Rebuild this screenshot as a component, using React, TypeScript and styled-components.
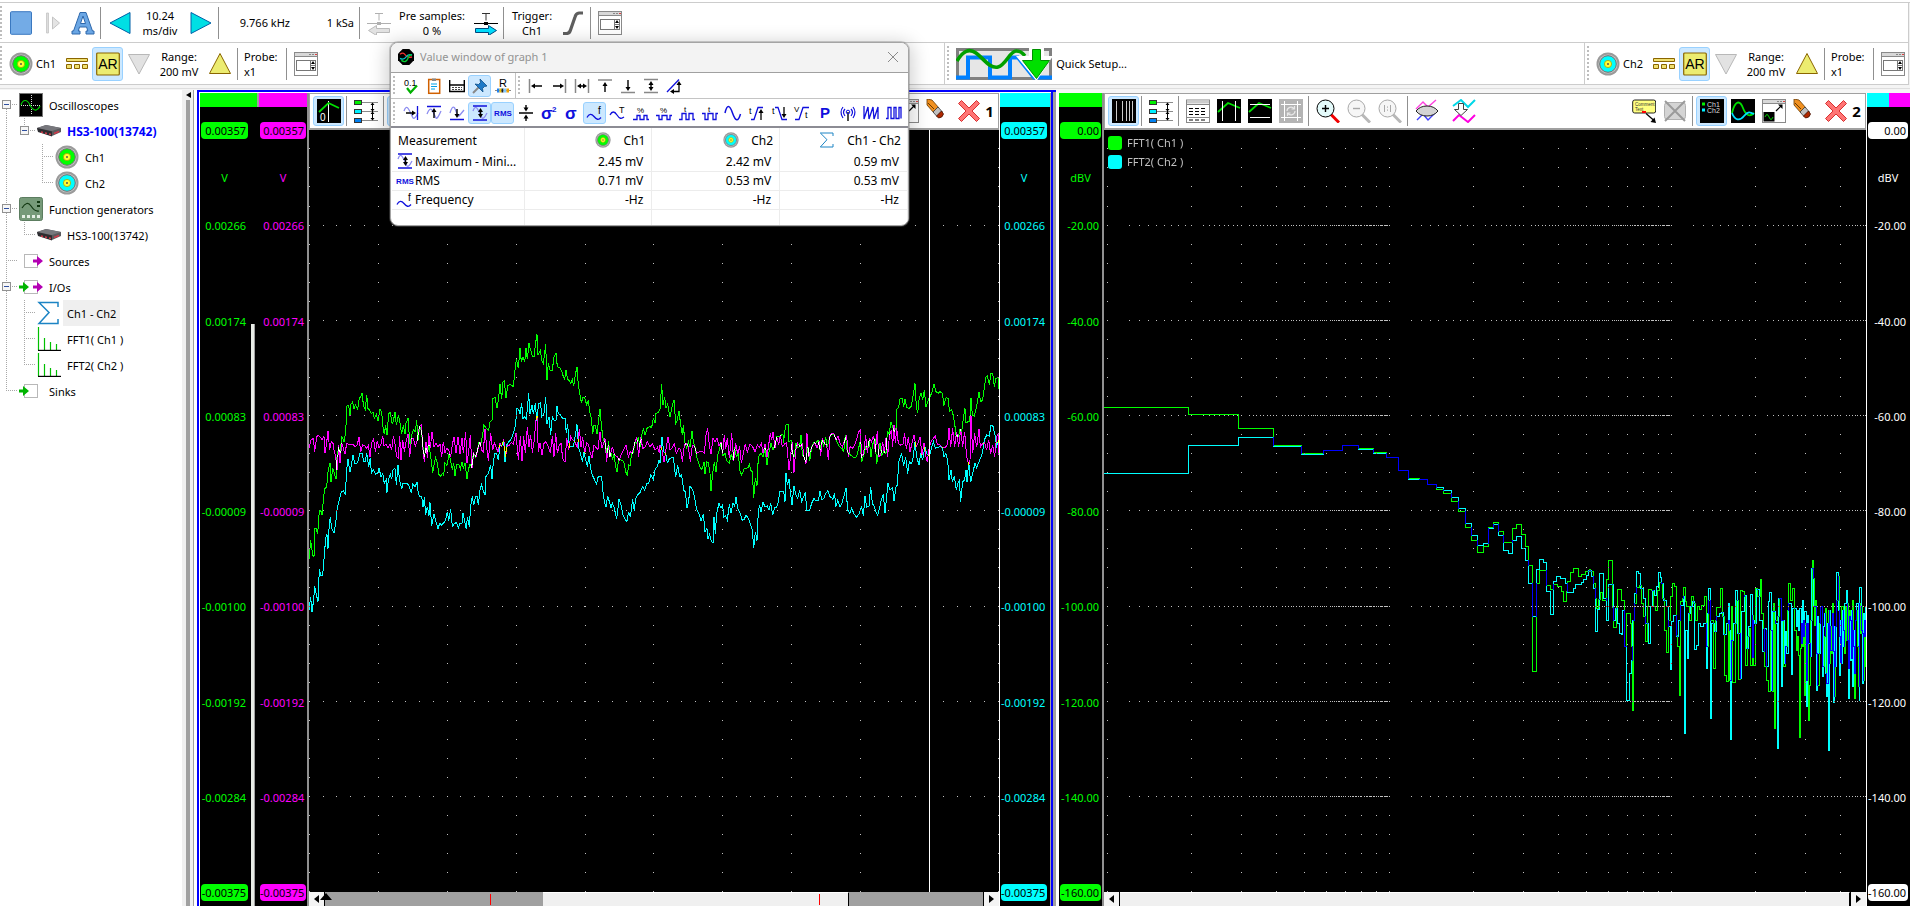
import React from "react";
import styled, { createGlobalStyle, css } from "styled-components";

const UI_FONT = '"Noto Sans", "Open Sans", sans-serif';
const GREEN = "#00ff00";
const CYAN = "#00ffff";
const MAGENTA = "#ff00ff";
const HIGHLIGHT = "#cce8ff";
const HIGHLIGHT_EDGE = "#99d1ff";

const GlobalStyle = createGlobalStyle`
  * { box-sizing: border-box; }
  html, body { margin: 0; padding: 0; background: #f0f0f0; }
  body { font-family: ${UI_FONT}; font-size: 11px; line-height: 15px; color: #000; overflow: hidden; }
  button { font: inherit; color: inherit; padding: 0; margin: 0; border: 0; background: none; }
  svg { display: block; }
  ul, ol { list-style: none; margin: 0; padding: 0; }
`;

/* ---------- page frame ---------- */

const Page = styled.div`
  position: relative;
  display: flex;
  flex-direction: column;
  height: 100vh;
  min-height: 600px;
`;

const MenuEdge = styled.div`
  height: 3px;
  background: #fff;
  border-bottom: 1px solid #cccccc;
`;

const ToolRow = styled.div<{ $height: number }>`
  display: flex;
  height: ${(p) => p.$height}px;
  margin-right: 1px;
  background: #fff;
  border-bottom: 1px solid #cccccc;
  border-right: 1px solid #cccccc;
`;

const ToolGroup = styled.div<{ $divided?: boolean }>`
  display: flex;
  align-items: center;
  ${(p) => p.$divided && "border-left: 1px solid #cccccc; padding-left: 2px;"}
`;

const Spacer = styled.div<{ $grow?: number }>`
  flex: ${(p) => p.$grow ?? 1};
`;

const Grip = styled.div<{ $width: number }>`
  align-self: stretch;
  width: ${(p) => p.$width}px;
  margin: 3px 0;
  background: repeating-linear-gradient(to bottom, #bdbdbd 0 2px, transparent 2px 4px) left / 2px 100% no-repeat;
`;

const Rule = styled.div<{ $height?: number }>`
  width: 6px;
  height: ${(p) => p.$height ?? 32}px;
  background: linear-gradient(#909090, #909090) 2px 0 / 1px 100% no-repeat;
`;

const ToolButton = styled.button<{ $on?: boolean; $height?: number }>`
  display: flex;
  align-items: center;
  justify-content: center;
  flex: none;
  width: 31px;
  height: ${(p) => p.$height ?? 34}px;
  border-radius: 3px;
  border: 1px solid transparent;
  ${(p) =>
    p.$on &&
    css`
      background: ${HIGHLIGHT};
      border-color: ${HIGHLIGHT_EDGE};
    `}
`;

const ToolText = styled.div<{ $width: number; $align?: string }>`
  width: ${(p) => p.$width}px;
  text-align: ${(p) => p.$align ?? "center"};
  white-space: pre-line;
`;

const RecordText = styled(ToolText)`
  margin-right: 3px;
`;

const ProbeText = styled(ToolText)`
  padding-left: 3px;
`;

const QuickSetupButton = styled.button`
  display: flex;
  align-items: center;
  gap: 3px;
  margin-left: 4px;
`;

const DockEdge = styled.div`
  height: 5px;
  background: linear-gradient(#dedede, #dedede) 0 3px / 100% 1px no-repeat #f4f4f4;
`;

const Workspace = styled.main`
  flex: 1;
  min-height: 0;
  display: grid;
  grid-template-columns: 182px 15px minmax(0, 859fr) minmax(0, 854fr);
`;

/* ---------- icons ---------- */

const Icon: React.FC<{ size?: number; children: React.ReactNode }> = ({ size = 24, children }) => (
  <svg width={size} height={size} viewBox="0 0 24 24" fill="none" aria-hidden="true">
    {children}
  </svg>
);

const ChannelIcon = ({ color, size }: { color: string; size?: number }) => (
  <Icon size={size}>
    <circle cx="12" cy="12" r="11.5" fill="#9a9a9a" />
    <circle cx="12" cy="12" r="9.6" fill="#c9c9c9" />
    <circle cx="12" cy="12" r="8.3" fill={color} stroke="#6f6f6f" strokeWidth="1" />
    <circle cx="12" cy="12" r="3.6" fill="#ffff30" stroke="#a8a800" strokeWidth=".8" />
    <circle cx="12" cy="12" r="1" fill="#555" />
  </Icon>
);

const PanelIcon = () => (
  <Icon>
    <rect x=".5" y=".5" width="23" height="23" fill="#fff" stroke="#8a8a8a" />
    <path d="M1 2.5h22" stroke="#d8d8d8" strokeWidth="3" />
    <path d="M.5 4.5h23" stroke="#8a8a8a" />
    <path d="M15 2.5h2M18 2.5h2" stroke="#888" />
    <path d="M21 2.5h2" stroke="#e04040" />
    <rect x="2.5" y="8.500" width="19" height="10" stroke="#777" />
    <path d="M16.500 8.500v10M16.500 13.500h5" stroke="#777" />
    <path d="M17 12l2-3 2 3zM17 15l2 3 2-3z" fill="#000" />
  </Icon>
);

const DcIcon = () => (
  <Icon>
    <path d="M1.500 6.500h21v3h-21zM1.500 12.500h5v4h-5zM9.500 12.500h5v4h-5zM17.500 12.500h5v4h-5z" fill="#f0e070" stroke="#8a6500" />
  </Icon>
);

const AutoRangeIcon = () => (
  <Icon>
    <rect x=".7" y="1" width="22.600" height="22" rx="1" fill="#ecec70" stroke="#8a6500" strokeWidth="1.200" />
    <text x="12" y="16.500" textAnchor="middle" fontFamily='"Liberation Sans", sans-serif' fontSize="14" fill="#000">AR</text>
  </Icon>
);

const TriangleIcon = ({ dir, fill, stroke }: { dir: "up" | "down" | "left" | "right"; fill: string; stroke: string }) => {
  const shapes = {
    up: "M12 1.500L22.500 21.500H1.500z",
    down: "M12 22L22.500 2.500H1.500z",
    left: "M2 12L22 1.500V22.500z",
    right: "M22 12L2 1.500V22.500z",
  };
  return (
    <Icon>
      <path d={shapes[dir]} fill={fill} stroke={stroke} />
    </Icon>
  );
};

const StopIcon = () => (
  <Icon>
    <rect x="1.500" y=".7" width="21" height="22.600" rx="1" fill="#73abe6" stroke="#3a78c0" />
  </Icon>
);

const OneShotIcon = () => (
  <Icon>
    <path d="M6.500 2h2v20h-2z" fill="#ddd" stroke="#c4c4c4" strokeWidth=".8" />
    <path d="M12.500 6l7 6-7 6z" fill="#e4e4e4" stroke="#c4c4c4" />
  </Icon>
);

const AutoIcon = () => (
  <Icon>
    <path
      fillRule="evenodd"
      d="M9 1.500h6L21.500 20H23v3h-8v-3h1.800l-1.200-4H8.500l-1.200 4H9v3H1v-3h1.500L8 4.500zM9.500 12.500h5L12 5z"
      fill="#6aa6e4"
      stroke="#2e68ac"
      strokeWidth="1"
    />
  </Icon>
);

const PreSampleIcon = ({ active }: { active?: boolean }) => {
  const ink = active ? "#000" : "#b0b0b0";
  return (
    <Icon>
      <path d="M8 2.500h8M12 2.500v7" stroke={active ? "#333" : "#b0b0b0"} />
      <path d="M0 12.500h24" stroke={ink} />
      <rect x="10" y="11" width="4" height="3" fill={ink} />
      {active ? (
        <path d="M1.500 17.500h13v-3l8 5-8 5v-3h-13z" fill="#00dfff" stroke="#004a80" />
      ) : (
        <path d="M22.500 17.500h-13v-3l-8 5 8 5v-3h13z" fill="#e2e2e2" stroke="#bbb" />
      )}
    </Icon>
  );
};

const SlopeIcon = () => (
  <Icon>
    <path d="M2 22.500h3.500q3 0 4-3.500L14 6q1-3.700 4-4h4" stroke="#5e5e5e" strokeWidth="3.200" />
  </Icon>
);

const QuickSetupIcon = () => (
  <svg width="97" height="34" viewBox="0 0 97 34" fill="none" aria-hidden="true">
    <rect x="1.500" y="2.500" width="93" height="29" fill="#e6e6e6" stroke="#808080" strokeWidth="3" />
    <path d="M0 30.500h12V10.500h22v20h20V10.500h8L78 30.500h18" stroke="#0080ff" strokeWidth="4" />
    <path d="M1 14C7 4 13 1 20 6s14 16 22 14S54 4 60 4s6 2 9 5" stroke="#00a000" strokeWidth="3.600" />
    <path d="M73 0h15v9h9L80.500 34 60 9h13z" fill="#fff" />
    <path d="M76.500 2.500h8v11h9L80.500 31.500 66.500 13.500h10z" fill="#00e000" stroke="#009000" />
  </svg>
);

const ScopeIcon = () => (
  <Icon>
    <rect x=".5" y=".5" width="23" height="23" fill="#000" stroke="#777" />
    <path d="M12.500 2v20M2 12.500h20" stroke="#ddd" strokeDasharray="1 1" />
    <path d="M2 12c2-6 6-6 9 0s7 7 10 1" stroke="#00d000" strokeWidth="1.200" />
  </Icon>
);

const DeviceIcon = () => (
  <Icon>
    <path d="M0 9l9-3 15 3v4l-9 4L1 12z" fill="#5a5a5e" />
    <path d="M0 9l9-3 15 3-9 3z" fill="#77777c" />
    <path d="M0 9l15 3.500v5L1 13z" fill="#2c2c30" />
    <path d="M4 13l2 .5M8 14l2 .5M12 15l2 .5M17 14.500l5-2" stroke="#d03a4a" strokeWidth="1.500" />
  </Icon>
);

const GeneratorIcon = () => (
  <Icon>
    <rect x=".5" y=".5" width="23" height="23" rx="2" fill="#769a79" stroke="#5c7d60" />
    <path d="M3 11q5-8 9-2t8 5" stroke="#123812" strokeWidth="1.200" />
    <path d="M18 4h3v2h-3zM18 8h3v2h-3z" fill="#123812" />
    <path d="M3 18h3v3H3zM8 18h3v3H8zM13 18h3v3h-3zM18 18h3v3h-3z" fill="#e4efe4" />
  </Icon>
);

const PortIcon = ({ input, output }: { input?: boolean; output?: boolean }) => (
  <Icon>
    <rect x="5.500" y="5.500" width="13" height="13" fill="#fff" stroke="#b8b8b8" />
    {input && <path d="M0 10.500h4V7l6 5-6 5v-3.500H0z" fill="#00b400" />}
    {output && <path d="M14 10.500h4V7l6 5-6 5v-3.500h-4z" fill="#b400b4" />}
  </Icon>
);

const SigmaIcon = ({ size }: { size?: number }) => (
  <Icon size={size}>
    <path d="M21 6V1.500H2L12 11.500 2 22.500h19V18" stroke="#1c84c4" strokeWidth="1.500" />
  </Icon>
);

const SpectrumIcon = () => (
  <Icon>
    <path d="M1.500 0v23M7.500 11v12M13.500 15v8M19.500 17v6" stroke="#00c000" strokeWidth="1.200" />
    <path d="M1 23.400h23" stroke="#000" strokeWidth="1.200" />
  </Icon>
);

const OffsetIcon = () => (
  <Icon>
    <rect width="24" height="24" fill="#000" />
    <path d="M11.500 2v21" stroke="#fff" />
    <path d="M2 13l9.500-9L22 9" stroke="#00e000" strokeWidth="1.800" />
    <text x="3" y="22" fontFamily='"Liberation Sans", sans-serif' fontSize="10" fill="#fff">0</text>
  </Icon>
);

const BarsIcon = () => (
  <Icon>
    <rect width="24" height="24" fill="#000" />
    <path d="M4.500 2v20M10.500 2v20M14.500 2v20M17.500 2v20M20.500 2v20" stroke="#fff" strokeWidth=".8" />
  </Icon>
);

const LayoutIcon = () => (
  <Icon>
    <path d="M8 3.500h16M8 12.500h16M8 21.500h16" stroke="#8a8a8a" />
    <rect x=".5" y="1.500" width="7" height="4" fill="#00f000" stroke="#333" />
    <rect x=".5" y="10.500" width="7" height="4" fill="#00f0ff" stroke="#333" />
    <rect x=".5" y="19.500" width="7" height="4" fill="#0080f0" stroke="#333" />
    <path d="M18.500 4v17" stroke="#000" />
    <path d="M16.500 6l2-2.500 2 2.500zM16.500 10l2 2.500 2-2.500zM16.500 15l2-2.500 2 2.500zM16.500 19l2 2.500 2-2.500z" fill="#000" />
  </Icon>
);

const TableIcon = () => (
  <Icon>
    <rect x=".5" y="1" width="23" height="22.500" fill="#fff" stroke="#888" />
    <path d="M1 3h22" stroke="#ccc" strokeWidth="3" />
    <path d="M.5 5.500h23M.5 18.500h23" stroke="#888" />
    <path d="M3 9.500h18M3 12.500h18M3 15.500h18M3 21h18" stroke="#000" strokeDasharray="4 2" />
  </Icon>
);

const CursorsIcon = ({ dir }: { dir: "v" | "h" }) => (
  <Icon>
    <rect width="24" height="24" fill="#000" />
    <path d="M1 13l10-9 12 5" stroke="#00e000" strokeWidth="1.800" />
    <path d={dir === "v" ? "M5.500 2v20M18.500 2v20" : "M2 5.500h20M2 18.500h20"} stroke="#fff" />
  </Icon>
);

const FrameIcon = () => (
  <Icon>
    <rect width="24" height="24" fill="#b4b4b4" />
    <path d="M5.500 2v20M18.500 2v20M2 5.500h20M2 18.500h20" stroke="#fff" />
    <path d="M8 12a4 4 0 0 1 7-2.500M16 12a4 4 0 0 1-7 2.500M15.500 7v3h-3M8.500 17v-3h3" stroke="#e8e8e8" strokeWidth="1.200" />
  </Icon>
);

const MagnifierIcon = ({ mark, active }: { mark: "plus" | "minus" | "one"; active?: boolean }) => {
  const ink = active ? "#000" : "#a8a8a8";
  return (
    <Icon>
      <path d="M15 15.500l8 8" stroke={active ? "#f00000" : "#b8b8b8"} strokeWidth="3" />
      <circle cx="9.500" cy="9.500" r="8.500" fill={active ? "#e4fbfb" : "#f6f6f6"} stroke={ink} />
      {mark === "plus" && <path d="M9.500 6v7M6 9.500h7" stroke={ink} strokeWidth="1.400" />}
      {mark === "minus" && <path d="M6 9.500h7" stroke={ink} strokeWidth="1.400" />}
      {mark === "one" && <path d="M6.500 6v7M12.500 6v7M9.500 7.500v1.200M9.500 10.500v1.200" stroke={ink} />}
    </Icon>
  );
};

const EnvelopeIcon = () => (
  <Icon>
    <path d="M1 10L8 3l5 5 8-7" stroke="#ff40e0" strokeWidth="1.400" />
    <path d="M2 21l6-6 5 6 8-8" stroke="#4040ff" strokeWidth="1.400" />
    <path d="M1 12q4-5 11-5t11 5q-4 5-11 5T1 12z" fill="#d4d4d4" stroke="#222" />
  </Icon>
);

const MergeIcon = () => (
  <Icon>
    <path d="M1 7l8-6 7 7 7-7" stroke="#00d8e8" strokeWidth="2" />
    <path d="M1 22l6-6 9 7 7-7" stroke="#ff00e0" strokeWidth="2" />
    <path d="M6.500 4.500h5v6h4l-6.500 6-6.500-6h4z" fill="#fff" stroke="#444" />
  </Icon>
);

const CommentIcon = () => (
  <Icon>
    <rect x=".7" y="1" width="23" height="13" rx="2" fill="#ffff80" stroke="#222" />
    <text x="3" y="6.500" fontFamily='"Liberation Sans", sans-serif' fontSize="4.500" fill="#333">Comment</text>
    <text x="3" y="11.500" fontFamily='"Liberation Sans", sans-serif' fontSize="4.500" fill="#333">Text</text>
    <path d="M10 13h4" stroke="#f00" strokeWidth="2" />
    <path d="M14 14.500l8 7" stroke="#000" strokeWidth="1.200" />
    <path d="M24 24l-5.500-1 4-4.500z" fill="#000" />
  </Icon>
);

const NoCommentIcon = () => (
  <Icon>
    <rect x="1.500" y="3.500" width="21" height="17" rx="3" fill="#d4d4d4" stroke="#b0b0b0" />
    <path d="M2 2l20 20M22 2L2 22" stroke="#9a9a9a" strokeWidth="2" />
  </Icon>
);

const LegendIcon = () => (
  <Icon>
    <rect width="24" height="24" fill="#000" />
    <path d="M2 3.500h3v3H2z" fill="#00f000" />
    <path d="M2 9.500h3v3H2z" fill="#00f0ff" />
    <text x="7" y="7.500" fontFamily='"Liberation Sans", sans-serif' fontSize="7" fill="#ddd">Ch1</text>
    <text x="7" y="14" fontFamily='"Liberation Sans", sans-serif' fontSize="7" fill="#ddd">Ch2</text>
  </Icon>
);

const WavesIcon = () => (
  <Icon>
    <rect width="24" height="24" fill="#000" />
    <path d="M1 14C4 1 9 1 12 9s7 9 11 5" stroke="#00e000" strokeWidth="1.800" />
    <path d="M1 14c3 8 8 8 12 3s6-4 10-2" stroke="#00e0ff" strokeWidth="1.800" />
  </Icon>
);

const PopOutIcon = () => (
  <Icon>
    <rect x=".5" y=".5" width="23" height="23" fill="#fff" stroke="#8a8a8a" />
    <path d="M1 2.500h22" stroke="#d8d8d8" strokeWidth="3" />
    <path d="M.5 4.500h23" stroke="#8a8a8a" />
    <path d="M15 2.500h2M18 2.500h2" stroke="#888" />
    <path d="M21 2.500h2" stroke="#e04040" />
    <rect x="1.500" y="13" width="11" height="9.500" fill="#000" />
    <path d="M3 18q2-5 4 0t4 0" stroke="#00d000" />
    <path d="M14 12l5-5" stroke="#000" strokeWidth="1.200" />
    <path d="M20.500 5.500v4.500l-4.500-4.500z" fill="#000" />
  </Icon>
);

const EraserIcon = () => (
  <Icon>
    <path d="M1 0l5 1 7 8-5 5-7-8z" fill="#f09020" stroke="#6a3a00" strokeWidth=".8" />
    <path d="M2 4l6 6" stroke="#6a3a00" />
    <path d="M12 8l4 4.500-5 5L7 13z" fill="#c0c0c0" stroke="#333" strokeWidth=".8" />
    <path d="M15.500 12l2 3q-1 4-5 4l-2-2z" fill="#b02800" stroke="#401000" strokeWidth=".8" />
  </Icon>
);

const RemoveIcon = () => (
  <Icon>
    <path d="M4.500 1.500l7.500 7.500 7.500-7.500 3 3-7.500 7.500 7.500 7.500-3 3-7.500-7.500-7.500 7.500-3-3L9 12 1.500 4.500z" fill="#ff7474" stroke="#d83030" />
  </Icon>
);

const AppIcon = () => (
  <Icon size={16}>
    <path d="M7 0h10l7 7v10l-7 7H7l-7-7V7z" fill="#000" />
    <path d="M3 8q5-4 8 1t10 3" stroke="#f03030" strokeWidth="2" />
    <path d="M3 14q6 3 9-2t9-3" stroke="#00c8c8" strokeWidth="2" />
    <path d="M5 17q7 5 10-3t5-4" stroke="#00d030" strokeWidth="2" />
  </Icon>
);

/* ---------- small measurement icons ---------- */

const BLUE = "#1010dd";
const PALE = "#8c8cf0";
const LIB = '"Liberation Sans", sans-serif';

const MiniSvg = styled.svg`
  overflow: visible;
  flex: none;
`;

const Mini: React.FC<{ children: React.ReactNode }> = ({ children }) => (
  <MiniSvg width="16" height="16" viewBox="0 0 16 16" fill="none" aria-hidden="true">
    {children}
  </MiniSvg>
);

const upHead = (x: number, y: number) => `M${x - 2.5} ${y + 4}l2.500-4 2.500 4z`;
const downHead = (x: number, y: number) => `M${x - 2.5} ${y - 4}l2.500 4 2.500-4z`;
const leftHead = (x: number, y: number) => `M${x + 4} ${y - 2.5}l-4 2.500 4 2.500z`;
const rightHead = (x: number, y: number) => `M${x - 4} ${y - 2.5}l4 2.500-4 2.500z`;

const paleWave = "M1 6Q3 0 5.500 4T9.500 12T15 8";

const viewIcons: [string, React.ReactNode, boolean?][] = [
  ["Show values", <Mini><text x="1" y="8" fontFamily={LIB} fontSize="9" fill="#000">0.1</text><path d="M4 10l3.500 4.500L14 7.500" stroke="#00b000" strokeWidth="2.200" /></Mini>],
  ["Copy to clipboard", <Mini><rect x="2.700" y="1.500" width="11" height="13.800" fill="#fff" stroke="#d06000" strokeWidth="1.500" /><path d="M6 .5h4v2.500H6z" fill="#888" /><path d="M5 6h6M5 8.500h6M5 11h4" stroke="#00a0e8" /></Mini>],
  ["Table layout", <Mini><path d="M.7 2v11.500h14.600V2M.7 7h14.600" stroke="#000" strokeWidth="1.400" /><path d="M3 9.500h10M3 11.500h10" stroke="#444" strokeDasharray="2 1" /></Mini>],
  ["Stay on top", <Mini><path d="M1 15l5.500-5.500" stroke="#888" strokeWidth="2" /><path d="M8 1l7 7-2.500.5-2 2 .5 3.500-8-8 3.500.5 2-2z" fill="#1e7ac8" stroke="#0a4c88" strokeWidth=".8" /></Mini>, true],
  ["Resistance", <Mini><text x="8" y="9" textAnchor="middle" fontFamily={LIB} fontSize="11" fill="#000">R</text><path d="M0 12.500h16" stroke="#888" /><path d="M2 10.500h2.500v4H2z" fill="#2080f0" /><path d="M4.500 10.500h2v4h-2z" fill="#f0c000" /><path d="M6.500 10.500h2v4h-2z" fill="#222" /><path d="M8.500 10.500h3v4h-3z" fill="#80c8ff" /><path d="M11.500 10.500H14v4h-2.500z" fill="#f0a000" /></Mini>],
];

const rangeIcons: [string, React.ReactNode][] = [
  ["To left cursor", <Mini><path d="M1.500 1v14" stroke="#888" strokeWidth="1.500" /><path d="M5 8h9" stroke="#000" strokeWidth="1.400" /><path d={leftHead(3, 8)} fill="#000" /></Mini>],
  ["To right cursor", <Mini><path d="M14.500 1v14" stroke="#888" strokeWidth="1.500" /><path d="M2 8h9" stroke="#000" strokeWidth="1.400" /><path d={rightHead(13, 8)} fill="#000" /></Mini>],
  ["Between cursors", <Mini><path d="M1.500 1v14M14.500 1v14" stroke="#888" strokeWidth="1.500" /><path d="M5 8h6" stroke="#000" strokeWidth="1.400" /><path d={leftHead(3, 8) + rightHead(13, 8)} fill="#000" /></Mini>],
  ["Upper level", <Mini><path d="M1 2h14" stroke="#888" strokeWidth="1.500" /><path d="M8 6v8" stroke="#000" strokeWidth="1.400" /><path d={upHead(8, 4)} fill="#000" /></Mini>],
  ["Lower level", <Mini><path d="M1 14.500h14" stroke="#888" strokeWidth="1.500" /><path d="M8 2v8" stroke="#000" strokeWidth="1.400" /><path d={downHead(8, 13)} fill="#000" /></Mini>],
  ["Level difference", <Mini><path d="M1 1.500h14M1 14.500h14" stroke="#888" strokeWidth="1.500" /><path d="M8 5v6" stroke="#000" strokeWidth="1.400" /><path d={upHead(8, 3) + downHead(8, 13)} fill="#000" /></Mini>],
  ["Slope", <Mini><path d="M1 14L13 1.500" stroke={BLUE} strokeWidth="1.300" /><path d="M13 6v7.500H7" stroke="#000" strokeWidth="1.300" /><path d={upHead(13, 3) + leftHead(4, 13.5)} fill="#000" /></Mini>],
];

const PeakIcon = () => (
  <Mini><path d={paleWave} stroke={PALE} strokeWidth="1.300" /><path d="M1 1h14M1 15h14" stroke={BLUE} strokeWidth="1.300" /><path d="M8.500 6v4" stroke="#000" strokeWidth="1.500" /><path d={upHead(8.5, 3) + downHead(8.5, 13)} fill="#000" /></Mini>
);
const RmsIcon = () => (
  <Mini><text x="8" y="11" textAnchor="middle" fontFamily={LIB} fontSize="8" fontWeight="700" fill={BLUE}>RMS</text></Mini>
);
const FrequencyIcon = () => (
  <Mini><path d="M0 12.500c2-4 4.500-4 7-1s4.500 4 7 1" stroke={BLUE} strokeWidth="1.300" /><text x="11" y="9" fontFamily={LIB} fontSize="10" fill="#000">f</text></Mini>
);

const measureIcons: [string, React.ReactNode, boolean?][] = [
  ["Mean", <Mini><path d={paleWave} stroke={PALE} strokeWidth="1.300" /><path d="M3 8h7" stroke="#000" strokeWidth="1.400" /><path d={rightHead(13, 8)} fill="#000" /><path d="M14.500 1v14" stroke={BLUE} strokeWidth="1.300" /></Mini>],
  ["Maximum", <Mini><path d="M1 9Q4 1 6.500 6t3.500 7T15 6" stroke={PALE} strokeWidth="1.300" /><path d="M1 1.500h14" stroke={BLUE} strokeWidth="1.300" /><path d="M8 6v7" stroke="#000" strokeWidth="1.400" /><path d={upHead(8, 3)} fill="#000" /></Mini>],
  ["Minimum", <Mini><path d="M1 8Q4-2 6.500 5t3.500 6T15 5" stroke={PALE} strokeWidth="1.300" /><path d="M1 14.500h14" stroke={BLUE} strokeWidth="1.300" /><path d="M8 4v6" stroke="#000" strokeWidth="1.400" /><path d={downHead(8, 13)} fill="#000" /></Mini>],
  ["Maximum minus minimum", <PeakIcon />, true],
  ["RMS", <RmsIcon />, true],
  ["Mid level", <Mini><path d="M1 8h14" stroke="#000" strokeWidth="1.400" /><path d="M8 0v3M8 13v3" stroke="#000" strokeWidth="1.400" /><path d={downHead(8, 6.5) + upHead(8, 9.5)} fill="#000" /></Mini>],
  ["Variance", <Mini><text x="0" y="14" fontFamily={LIB} fontSize="17" fontWeight="700" fill={BLUE}>σ</text><text x="11" y="7" fontFamily={LIB} fontSize="8" fontWeight="700" fill={BLUE}>2</text></Mini>],
  ["Standard deviation", <Mini><text x="1" y="14" fontFamily={LIB} fontSize="17" fontWeight="700" fill={BLUE}>σ</text></Mini>],
  ["Frequency", <FrequencyIcon />, true],
  ["Period", <Mini><path d="M0 10c2-4 4.500-4 7 0s4.500 4 7 2" stroke={BLUE} strokeWidth="1.300" /><text x="9" y="8" fontFamily={LIB} fontSize="9" fill="#000">T</text></Mini>],
  ["Duty cycle", <Mini><path d="M0 14.500h4v-4h3v4h4v-4h3v4h2" stroke={BLUE} strokeWidth="1.300" /><text x="4" y="8" fontFamily={LIB} fontSize="8" fill="#000">%</text></Mini>],
  ["Negative duty cycle", <Mini><path d="M0 10.500h3v4h3v-4h5v4h3v-4h2" stroke={BLUE} strokeWidth="1.300" /><text x="4" y="8" fontFamily={LIB} fontSize="8" fill="#000">%</text></Mini>],
  ["Pulse width", <Mini><path d="M0 14.500h3v-6h4v6h3v-6h4v6h2" stroke={BLUE} strokeWidth="1.300" /><text x="5" y="7" fontFamily={LIB} fontSize="8" fill="#000">t</text></Mini>],
  ["Negative pulse width", <Mini><path d="M0 8.500h3v6h3v-6h5v6h3v-6h2" stroke={BLUE} strokeWidth="1.300" /><text x="6" y="7" fontFamily={LIB} fontSize="8" fill="#000">t</text></Mini>],
  ["Crest factor", <Mini><path d="M0 8Q3-5 7.500 8t8 1" stroke={BLUE} strokeWidth="1.500" /></Mini>],
  ["Rise time", <Mini><path d="M3 14.500h3l4-12h5" stroke={BLUE} strokeWidth="1.300" /><text x="1" y="9" fontFamily={LIB} fontSize="9" fill="#000">t</text><path d="M13 7v8" stroke="#000" strokeWidth="1.300" /><path d={upHead(13, 4)} fill="#000" /></Mini>],
  ["Fall time", <Mini><path d="M4 2.500h3l4 12h5" stroke={BLUE} strokeWidth="1.300" /><text x="1" y="9" fontFamily={LIB} fontSize="9" fill="#000">t</text><path d="M13 2v8" stroke="#000" strokeWidth="1.300" /><path d={downHead(13, 13)} fill="#000" /></Mini>],
  ["Slew rate", <Mini><path d="M1 14.500h4l4-12h6" stroke={BLUE} strokeWidth="1.300" /><text x="0" y="7" fontFamily={LIB} fontSize="8" fill="#000">V</text><text x="11" y="13" fontFamily={LIB} fontSize="9" fill="#000">t</text></Mini>],
  ["Power", <Mini><text x="3" y="13" fontFamily={LIB} fontSize="15" fontWeight="700" fill={BLUE}>P</text></Mini>],
  ["Radio", <Mini><path d="M5 4q-3 3 0 7M3 2q-4 5 0 11M11 4q3 3 0 7M13 2q4 5 0 11" stroke={BLUE} strokeWidth="1.200" /><path d="M8 7v9" stroke="#000" strokeWidth="1.400" /><circle cx="8" cy="7" r="1.800" stroke={BLUE} /></Mini>],
  ["Burst", <Mini><path d="M1 1v13L5 2l1 12 4-12 1 12 4-12v12" stroke={BLUE} strokeWidth="1.300" /></Mini>],
  ["Pulse train", <Mini><path d="M0 13.500h2v-11h3v11h3v-11h2v11h3v-11h2v11" stroke={BLUE} strokeWidth="1.300" /></Mini>],
];

/* ---------- instrument tree ---------- */

const TreePanel = styled.nav`
  background: #fff;
  padding-top: 2px;
  overflow: hidden;
`;

const TreeItem = styled.li`
  display: flex;
  align-items: center;
  height: 26px;
`;

const TreeIcon = styled.span`
  width: 26px;
  padding-left: 1px;
`;

const TreeLabel = styled.span<{ $strong?: boolean; $selected?: boolean }>`
  display: flex;
  align-items: center;
  height: 26px;
  padding: 0 4px;
  white-space: nowrap;
  margin-left: 1px;
  ${(p) => p.$strong && "font-size: 12px; font-weight: 700; color: #0000ff;"}
  ${(p) => p.$selected && "background: #efefef;"}
`;

type Guide = "tee" | "corner" | "through" | "blank" | "first" | "boxTee" | "boxCorner";

const guidePaths: Record<Guide, string> = {
  blank: "",
  through: "M6.500 0v26",
  tee: "M6.500 0v26M8 12.500h9",
  corner: "M6.500 0v13M8 12.500h9",
  first: "M6.500 17v9M12 12.500h5",
  boxTee: "M6.500 0v8M6.500 17v9M12 12.500h5",
  boxCorner: "M6.500 0v8M12 12.500h5",
};

const GuideCell = ({ kind }: { kind: Guide }) => {
  const boxed = kind === "first" || kind === "boxTee" || kind === "boxCorner";
  const art = (
    <svg width="18" height="26" viewBox="0 0 18 26" fill="none" aria-hidden="true" shapeRendering="crispEdges">
      <path d={guidePaths[kind]} stroke="#a8a8a8" strokeDasharray="1 1" />
      {boxed && (
        <>
          <rect x="2.500" y="8.500" width="8" height="8" fill="#f6f6f6" stroke="#919191" />
          <path d="M4 12.500h5" stroke="#3050a0" />
        </>
      )}
    </svg>
  );
  return boxed ? <button aria-label="Collapse">{art}</button> : art;
};

interface TreeRow {
  label: string;
  guides: Guide[];
  icon: React.ReactNode;
  strong?: boolean;
  selected?: boolean;
}

const treeRows: TreeRow[] = [
  { label: "Oscilloscopes", guides: ["first"], icon: <ScopeIcon /> },
  { label: "HS3-100(13742)", guides: ["through", "boxCorner"], icon: <DeviceIcon />, strong: true },
  { label: "Ch1", guides: ["through", "blank", "tee"], icon: <ChannelIcon color={GREEN} /> },
  { label: "Ch2", guides: ["through", "blank", "corner"], icon: <ChannelIcon color={CYAN} /> },
  { label: "Function generators", guides: ["boxTee"], icon: <GeneratorIcon /> },
  { label: "HS3-100(13742)", guides: ["through", "corner"], icon: <DeviceIcon /> },
  { label: "Sources", guides: ["tee"], icon: <PortIcon output /> },
  { label: "I/Os", guides: ["boxTee"], icon: <PortIcon input output /> },
  { label: "Ch1 - Ch2", guides: ["through", "tee"], icon: <SigmaIcon />, selected: true },
  { label: "FFT1( Ch1 )", guides: ["through", "tee"], icon: <SpectrumIcon /> },
  { label: "FFT2( Ch2 )", guides: ["through", "corner"], icon: <SpectrumIcon /> },
  { label: "Sinks", guides: ["corner"], icon: <PortIcon input /> },
];

const Splitter = styled.div`
  display: flex;
  background: linear-gradient(#a0a0a0, #a0a0a0) 11px 0 / 1px 100% no-repeat,
    linear-gradient(#fff, #fff) 12px 0 / 3px 100% no-repeat #f0f0f0;
`;

const SplitterHandle = styled.button`
  display: flex;
  flex-direction: column;
  align-items: center;
  width: 12px;
  &::before {
    content: "";
    margin: 2px 0 2px;
    border: 3px solid transparent;
    border-right: 5px solid #000;
    border-left: 0;
  }
  &::after {
    content: "";
    flex: 1;
    width: 4px;
    background: #a0a0a0;
  }
`;

/* ---------- graphs ---------- */

const GraphPane = styled.section<{ $active?: boolean }>`
  display: flex;
  min-width: 0;
  min-height: 0;
  ${(p) =>
    p.$active
      ? css`
          border-top: 2px solid #0000ff;
          border-left: 2px solid #0000ff;
          box-shadow: inset 1px 1px 0 #fff;
          padding: 1px 0 0 1px;
        `
      : css`
          border-top: 3px solid #f6f6f6;
          border-left: 3px solid #fff;
        `}
`;

const ActiveEdge = styled.div`
  width: 5px;
  margin-top: -1px;
  border-left: 2px solid #0000ff;
  background: #a0a0a0;
`;

const Center = styled.div`
  flex: 1;
  min-width: 0;
  display: flex;
  flex-direction: column;
`;

const GraphTools = styled.div`
  display: flex;
  align-items: center;
  height: 37px;
  padding: 0 3px;
  background: #fff;
  border: 1px solid #a0a0a0;
  border-bottom-width: 2px;
`;

const GraphNumber = styled.span`
  width: 11px;
  text-align: center;
  font-size: 15px;
  font-weight: 700;
`;

const AxisColumn = styled.div<{ $width: number; $edge: "left" | "right" | "both" | "none" }>`
  display: flex;
  flex-direction: column;
  width: ${(p) => p.$width}px;
  background: #000;
  ${(p) => (p.$edge === "left" || p.$edge === "both") && "border-left: 1px solid #fff;"}
  ${(p) => p.$edge === "right" && "border-right: 2px solid #909090;"}
  ${(p) => p.$edge === "both" && "border-right: 1px solid #a0a0a0;"}
`;

const AxisStrip = styled.div<{ $edge?: boolean }>`
  display: flex;
  height: 14px;
  flex: none;
  ${(p) => p.$edge && "border-right: 2px solid #a0a0a0;"}
`;

const StripColor = styled.span<{ $color: string }>`
  flex: 1;
  background: ${(p) => p.$color};
`;

const AxisBody = styled.div`
  flex: 1;
  min-height: 0;
  display: flex;
`;

const TickList = styled.ol<{ $color: string; $width: number }>`
  display: flex;
  flex-direction: column;
  justify-content: space-between;
  width: ${(p) => p.$width}px;
  padding: 15px 1px 5px;
  color: ${(p) => p.$color};
  text-align: right;
`;

const Tick = styled.li`
  height: 17px;
  line-height: 17px;
  padding-right: 2px;
  white-space: nowrap;
`;

const EndTick = styled(Tick)<{ $color: string }>`
  padding-right: 0;
  span {
    display: block;
    padding-right: 2px;
    border-radius: 4px;
    color: #000;
    background: ${(p) => p.$color};
  }
`;

const Unit = styled.div`
  margin-top: 31px;
  line-height: 15px;
  text-align: center;
`;

const RangeBar = styled.div`
  width: 4px;
  margin: 217px 0 0 2px;
  background: #e8ece6;
  border-right: 1px solid #a0a0a0;
`;

interface AxisProps {
  ticks: string[];
  unit: string;
  color: string;
  strip: string[];
  width: number;
  listWidth: number;
  edge: "left" | "right" | "both" | "none";
  rangeBar?: boolean;
}

const Axis = ({ ticks, unit, color, strip, width, listWidth, edge, rangeBar }: AxisProps) => (
  <AxisColumn $width={width} $edge={edge}>
    <AxisStrip $edge={rangeBar}>
      {strip.map((c) => (
        <StripColor key={c} $color={c} />
      ))}
    </AxisStrip>
    <AxisBody>
      <TickList $color={color} $width={listWidth}>
        {ticks.map((t, i) =>
          i === 0 || i === ticks.length - 1 ? (
            <EndTick key={t} $color={color}>
              <span>{t}</span>
              {i === 0 && <Unit>{unit}</Unit>}
            </EndTick>
          ) : (
            <Tick key={t}>{t}</Tick>
          )
        )}
      </TickList>
      {rangeBar && <RangeBar />}
    </AxisBody>
  </AxisColumn>
);

const PlotArea = styled.div`
  position: relative;
  flex: 1;
  min-height: 0;
  background: #000;
  isolation: isolate;
`;

const PlotSvg = styled.svg`
  width: 100%;
  height: 100%;
  shape-rendering: crispEdges;
`;

const Trace = styled.polyline`
  fill: none;
  stroke-width: 1px;
  vector-effect: non-scaling-stroke;
  mix-blend-mode: difference;
`;

const Legend = styled.ul`
  position: absolute;
  left: 4px;
  top: 3px;
  color: #c0c0c0;
`;

const LegendItem = styled.li<{ $color: string }>`
  display: flex;
  align-items: center;
  gap: 5px;
  height: 19px;
  &::before {
    content: "";
    width: 14px;
    height: 14px;
    border-radius: 3px;
    background: ${(p) => p.$color};
  }
`;

const ScrollBar = styled.div`
  display: flex;
  height: 14px;
  background: #a0a0a0;
`;

const ScrollArrow = styled.button<{ $dir: "left" | "right" }>`
  display: flex;
  align-items: center;
  justify-content: center;
  width: 16px;
  background: #f4f4f4;
  border: solid #000;
  border-width: ${(p) => (p.$dir === "left" ? "0 1px 0 0" : "0 0 0 1px")};
  &::before {
    content: "";
    border: 4px solid transparent;
    ${(p) =>
      p.$dir === "left"
        ? "border-right: 5px solid #000; border-left: 0;"
        : "border-left: 5px solid #000; border-right: 0;"}
  }
`;

const ScrollTrack = styled.div`
  position: relative;
  flex: 1;
  display: flex;
`;

const ScrollPart = styled.div<{ $share: number; $thumb?: boolean }>`
  flex: ${(p) => p.$share};
  ${(p) => p.$thumb && "background: #f0f0f0; border-top: 1px solid #fff; border-right: 1px solid #000;"}
`;

const ScrollMark = styled.span<{ $at: number }>`
  position: absolute;
  left: ${(p) => p.$at}%;
  top: 2px;
  bottom: 1px;
  width: 1px;
  background: #ff0000;
`;

const TriggerMark = styled.span`
  position: absolute;
  left: -5px;
  top: 1px;
  border: 6px solid transparent;
  border-bottom: 7px solid #000;
  border-top: 0;
`;

/* ---------- plot data ---------- */

const PLOT_HEIGHT = 762;
const TIME_WIDTH = 690;
const FFT_WIDTH = 762;

const rowStep = PLOT_HEIGHT / 8;
const dot = (x: number, y: number) => `M${Math.floor(x)} ${Math.floor(y)}h1v1h-1z`;

const timeGrid = (() => {
  let d = "";
  for (let c = 0; c <= 10; c++)
    for (let r = 0; r <= 40; r++) d += dot(0.4 + c * 68.9, (r * rowStep) / 5 - 0.2);
  for (let r = 0; r < 8; r++)
    for (let c = 0; c <= 50; c++) d += dot(0.4 + c * 13.78, r * rowStep - 0.2);
  return d;
})();

const fftGrid = (() => {
  let d = "";
  const xOf = (v: number) => 3 + 282 * Math.log10(v);
  for (let decade = 0; decade < 3; decade++)
    for (let m = 1; m < 10; m++) {
      const x = xOf(m * 10 ** decade);
      if (x < FFT_WIDTH) for (let r = 0; r <= 40; r++) d += dot(x, (r * rowStep) / 5 - 0.2);
      for (let f = 2; f < 10; f++) {
        const fx = xOf((m + f / 10) * 10 ** decade);
        if (fx < FFT_WIDTH) for (let r = 1; r < 8; r++) d += dot(fx, r * rowStep - 0.2);
      }
    }
  return d;
})();

type Point = [number, number];

/* Samples are stored in thirds of a plot unit, in sections that each have their own origin. */
const section = (dx: number, dy: number, text: string): Point[] =>
  text
    .trim()
    .split(/\s+/)
    .map((pair) => {
      const [x, y] = pair.split(",").map(Number);
      return [(x + dx) / 3, (y + dy) / 3];
    });

const toLine = (pts: Point[]) => pts.map((p) => p.join(",")).join(" ");

/* Each point holds its level from its own x to the x of the next one. */
const toSteps = (pts: Point[]) =>
  pts.map(([x, y], i) => (i === 0 ? `${x},${y}` : `${x},${pts[i - 1][1]} ${x},${y}`)).join(" ");

const ch1Time = [
  ...section(-27, 540, `27,748 32,690 38,735 42,740 44,655 48,655 53,672 58,603 62,601 66,615 70,570 74,537 80,530 84,487 90,458 93,517 98,475 103,490 108,508 111,440 116,412 121,430 125,378 132,395 137,365 141,288 146,286 150,318 153,283 158,275 162,297 167,284 173,300 178,262 182,262 186,250 191,290 196,298 200,254 204,296 209,300 214,310 219,306 223,325 229,312 234,332 240,298 245,305 249,350 253,373 257,345 261,375 266,310 271,308 277,343 281,328 285,307 289,345 295,318 299,330 305,373 310,345 315,372 318,340 324,325 330,403 335,375 340,360 346,365 350,330 354,392 359,348 364,362 368,402 373,440 378,415 383,425 387,405 392,440 398,488 403,460 407,443 412,460 417,493 422,499 427,490 431,495 435,458 441,466 447,432 452,452 457,480 461,458 465,498 470,462 476,462 481,478 486,456 490,475 495,460 501,508 505,480 510,462 515,472 520,432 526,440 532,422 537,397 542,405 548,375 552,344 558,355 566,362 570,335 576,330 579,265 585,262 591,295 596,262 600,223 605,268 609,215 613,212 618,265 623,228 631,223 640,230 645,180 649,148 655,175 660,115 664,155 669,140 674,157 678,115 682,148 687,100 691,117 697,138 702,140 707,98 711,73 714,135 721,122 726,152 730,160 734,130 737,103 741,211 745,160 750,180 757,180 762,140 768,130 772,170 778,172 785,182 790,200 794,208 798,180 803,208 808,212 812,220 817,208 821,228 826,195 831,170 835,225 840,255 844,278 849,262 854,262 860,285 865,270 869,305 874,325 878,372 882,345 886,347 891,372 896,330 900,298 904,345 909,385 915,400 921,430 926,392 929,440 933,430 938,450 942,432 947,470 951,485 956,447 962,450 968,452 973,462 977,485 982,498 986,465 990,468 995,430 1000,428 1004,398 1010,400 1015,382 1020,410 1025,375 1030,355 1035,375 1041,355 1048,350 1055,352 1060,325 1065,340 1068,310 1075,308`),
  ...section(1053, 540, `0,298 5,223 9,285 14,262 18,295 23,282 30,322 36,290 42,270 47,340 52,330 57,303 62,345 67,375 70,345 75,400 80,415 85,395 90,412 96,363 100,395 105,410 110,440 118,465 123,478 128,473 132,455 135,493 140,455 145,458 150,490 153,544 158,490 163,455 168,485 173,435 178,420 183,400 189,438 195,430 200,452 208,460 214,432 219,450 223,410 229,440 235,432 240,482 245,496 252,477 258,475 265,472 268,463 272,480 277,485 281,565 286,505 291,528 295,440 303,430 309,442 315,415 321,465 326,430 333,400 339,420 345,405 351,378 358,380 363,376 369,372 370,400 374,366 378,345 384,343 387,395 393,390 397,430 402,440 408,400 413,412 419,410 423,374 427,435 432,440 437,455 444,412 449,454 455,410 461,398 468,400 474,390 480,420 486,390 491,410 497,380 502,410 508,385 515,372 521,372 527,385 533,400 540,412 546,415 551,427 556,375 561,420 568,432 575,438 583,443 590,440 595,420 600,395 605,455 612,432 617,410 623,412 628,390 633,440 638,403 645,385 650,463 655,430 660,400 665,435 672,425 678,430 682,365 688,372 692,335 698,350 703,365 708,355 711,298 716,290 720,267 726,265 731,290 735,267 740,292 747,295 753,290 758,265 765,220 769,290 773,310 778,262 783,250 788,270 793,240 798,290 803,275 808,263 815,250 822,221 828,245 835,250 840,245 848,250 851,288 858,263 865,265 868,305 874,300 878,308 884,340 888,375 895,380 900,358 905,365 910,325 915,295 918,338 925,335 929,335 933,265 937,315 943,318 950,288 957,247 962,275 968,270 973,232 978,200 982,197 988,225 993,190 998,190 1003,230 1008,205 1015,203 1017,238`),
];

const ch2Time = [
  ...section(-27, 540, `27,900 32,862 36,905 41,870 44,828 48,850 54,875 58,778 63,798 68,795 73,735 77,685 81,673 84,716 88,640 91,620 95,655 102,670 107,640 112,592 118,570 124,545 130,542 136,552 140,480 144,448 150,487 154,465 159,435 164,460 170,460 175,450 180,430 187,430 191,455 196,455 200,428 206,470 211,443 214,490 220,480 227,492 233,490 237,475 243,500 248,490 253,520 259,508 261,548 265,510 271,492 275,508 279,480 285,475 289,525 294,466 298,505 305,538 309,520 315,520 322,520 328,530 334,550 338,522 345,530 351,517 355,552 360,560 365,560 369,592 373,562 377,615 382,590 387,617 390,577 395,647 402,613 408,635 414,657 419,640 425,645 432,638 437,630 442,605 446,632 452,598 457,650 463,640 470,638 475,655 480,640 486,640 489,610 494,635 499,658 502,620 508,650 512,590 517,558 521,585 527,560 531,558 535,585 540,540 545,523 549,540 555,555 558,500 565,490 572,465 576,508 580,455 585,430 590,430 595,450 600,405 606,405 611,392 615,455 620,405 627,395 633,388 640,370 647,345 650,295 656,298 660,312 665,280 669,325 675,320 679,330 686,250 690,312 696,285 700,312 706,280 710,332 716,280 722,278 725,320 732,310 737,262 741,342 747,320 752,375 757,318 762,330 768,330 771,288 775,310 781,315 788,325 795,325 799,370 803,342 808,412 814,408 820,410 826,375 831,343 836,415 842,432 847,455 852,425 857,450 862,470 867,438 872,478 878,497 884,510 890,522 895,498 905,500 908,540 913,575 918,592 923,557 928,575 933,595 937,578 943,595 950,628 957,568 963,585 969,615 975,628 981,634 986,605 991,622 998,568 1003,602 1007,565 1012,555 1020,548 1028,530 1034,542 1040,520 1046,520 1052,495 1060,508 1066,475 1072,470 1077,450`),
  ...section(1053, 540, `0,460 6,380 11,425 17,430 22,458 28,447 35,443 40,442 47,502 53,465 59,500 65,495 71,540 76,545 81,595 86,575 90,528 98,540 103,560 110,598 117,612 123,632 130,612 135,665 141,655 144,688 149,672 153,690 159,700 162,622 166,672 170,610 177,580 183,595 188,585 191,622 197,618 202,630 208,582 213,610 219,580 224,590 228,562 233,595 240,608 247,632 253,628 258,615 265,625 272,645 277,660 281,715 286,665 291,692 295,602 299,585 303,605 309,577 315,590 322,588 327,600 332,580 338,615 344,592 350,592 355,575 360,543 366,545 371,545 375,575 378,488 382,525 387,508 391,545 396,585 402,527 407,552 413,565 419,540 425,575 431,560 436,545 440,602 449,600 455,580 462,565 468,573 475,572 480,543 486,570 492,565 497,550 504,542 509,560 514,562 519,568 524,548 527,592 533,572 540,590 546,578 553,555 558,535 563,600 569,610 575,595 582,612 590,622 598,610 605,590 610,618 615,557 620,592 627,588 632,530 637,580 643,590 648,605 653,615 658,597 664,570 670,553 675,610 680,558 684,520 690,540 698,532 702,572 708,530 713,525 715,460 721,440 725,432 731,468 737,440 743,492 748,455 753,462 758,452 765,395 770,440 777,465 782,430 788,450 795,410 800,430 808,440 813,420 820,395 826,415 833,412 840,410 847,412 852,440 857,430 863,450 867,510 873,480 877,515 883,498 889,540 893,520 898,510 902,575 908,515 914,510 918,480 921,517 926,455 932,517 938,490 945,460 950,473 957,455 963,440 968,425 973,390 980,375 988,378 993,345 998,345 1005,375 1010,408 1017,390`),
];

const diffTime = [
  ...section(-27, 540, `27,415 33,390 40,385 44,425 50,380 55,376 60,380 66,390 72,380 75,430 80,398 84,362 89,420 94,395 99,400 103,425 107,440 111,480 116,405 120,460 125,400 130,415 135,432 140,400 150,405 158,402 165,410 172,405 177,380 182,425 188,405 195,408 200,415 205,405 210,440 215,398 221,387 226,425 232,392 237,415 243,403 248,378 252,407 258,402 264,415 270,402 275,420 280,378 285,402 290,440 295,445 299,378 303,450 308,390 313,425 318,395 324,372 329,440 335,385 340,385 346,408 352,390 358,350 364,345 369,420 373,455 378,395 382,445 386,370 391,415 396,365 402,410 408,400 414,412 420,402 425,440 430,395 435,430 440,415 446,420 452,440 457,405 462,380 468,430 474,380 480,432 486,385 490,430 497,365 501,460 506,425 511,375 516,475 521,430 528,440 535,412 540,395 545,420 550,425 555,358 560,410 565,452 572,370 578,420 583,398 588,412 594,425 600,400 605,410 611,388 617,440 622,405 628,405 634,398 640,402 648,370 655,450 661,378 666,453 671,378 676,430 682,350 687,410 692,375 697,428 703,390 707,335 711,318 715,425 720,400 726,435 732,400 738,395 744,408 751,430 757,378 762,440 767,370 772,430 778,405 783,400 788,445 795,457 800,385 806,420 812,380 818,390 825,395 832,415 838,358 843,410 848,380 854,430 860,398 865,402 870,425 876,445 882,405 888,412 894,418 900,365 905,415 910,402 915,385 920,455 925,405 930,440 937,410 944,435 952,440 958,450 965,430 972,418 978,405 985,440 990,425 997,430 1004,398 1010,380 1016,440 1022,380 1028,415 1035,412 1042,395 1050,410 1058,402 1065,420 1072,412 1078,430`),
  ...section(1053, 540, `0,405 6,420 12,455 17,425 24,380 30,420 37,412 43,402 49,430 56,415 62,418 67,455 73,405 79,400 85,410 91,455 97,405 104,410 110,430 118,425 127,425 133,430 138,375 143,355 148,405 153,432 159,385 165,395 171,385 177,408 183,395 188,430 193,375 197,418 202,385 208,445 215,370 221,452 227,400 233,432 239,408 244,460 250,430 256,402 262,425 270,402 278,410 285,425 292,405 298,412 304,400 309,430 315,402 321,440 326,405 331,370 335,390 339,365 345,415 350,380 356,405 361,375 367,410 374,402 380,398 387,480 393,425 397,395 402,488 407,420 413,400 420,410 427,402 432,440 438,462 441,370 446,440 452,420 459,405 465,398 471,415 478,392 482,438 487,385 493,400 500,405 505,450 510,378 516,370 522,372 528,390 534,378 541,402 547,410 553,395 560,375 565,440 570,410 577,415 584,405 591,385 596,365 601,360 605,440 611,430 617,375 622,430 628,385 634,395 641,378 646,425 652,362 656,440 662,435 668,395 673,430 678,385 683,440 688,380 694,360 698,410 702,345 706,400 710,355 715,400 722,405 729,402 734,370 739,418 745,380 750,425 756,400 762,375 768,410 774,400 780,380 786,435 792,400 798,440 802,455 806,420 813,395 820,385 826,378 832,402 840,405 848,412 856,412 863,402 867,355 872,412 878,355 884,410 890,365 896,412 902,358 908,410 914,365 920,440 926,465 930,450 933,318 938,430 944,370 950,412 957,358 961,412 968,400 974,398 980,420 986,390 992,432 998,405 1004,440 1010,380 1016,370 1017,435`),
];

const fft1 = [
  ...section(-42, 750, `42,82 295,103 445,145 550,196 634,220 700,211 757,196 806,205 850,217 889,232 925,271 955,295 987,298 1012,313 1039,328 1060,340 1084,364 1105,394 1126,442 1144,481 1162,517 1180,499 1195,442 1210,427 1225,454`),
  ...section(1128, 1170, `70,67 97,25 109,13 124,43 136,79 145,136 157,454 169,190 178,151 199,196 211,208 220,193 232,199 244,214 250,244 258,214 262,184 271,157 280,145 294,169 304,163 316,154 328,148 332,154 340,190 346,235 350,265 355,238 361,217 368,240 379,178 385,122 397,262 400,322 409,262 412,208 424,240 433,380 440,280 450,310 453,380 456,570 461,300 464,250 470,202 478,195 485,250 490,290 495,363 502,260 506,208 513,210 521,260 525,272 532,210 538,187 545,190 548,235 553,330 560,398 565,300 571,230 576,190 583,200 588,345 592,380 597,525 602,245 606,235 611,203 615,245 620,260 628,300 634,230 640,250 645,300 652,260 658,268 665,255 672,230 680,378 686,240 690,300 700,445 706,300 710,262 716,262 722,205 727,290 733,465 738,485 744,300 747,480 753,260 758,488 765,310 770,240 774,478 780,210 787,215 792,230 796,435 803,350 809,325 810,435 818,285 820,435 826,205 832,230 841,178 845,280 850,325 853,440 858,330 860,480 864,515 870,330 876,515 880,250 883,625 886,300 892,290 897,235 903,300 909,440 915,380 921,270 925,190 930,240 938,205 942,330 948,390 952,350 955,405 958,652 961,385 964,310 967,380 970,300 973,525 976,310 979,480 982,310 985,602 988,495 992,300 997,122 1000,175 1002,315 1007,240 1010,400 1013,495 1017,310 1020,260 1026,440 1032,350 1035,265 1038,490 1044,270 1047,430 1050,320 1053,400 1056,250 1060,395 1062,530 1065,320 1068,240 1075,170 1078,350 1081,430 1084,260 1089,330 1092,400 1095,260 1098,360 1101,250 1104,445 1107,270 1110,300 1113,415 1117,240 1120,380 1123,535 1127,300 1130,270 1133,380 1136,500 1139,250 1142,340 1145,260 1148,340 1150,480 1153,300 1155,440 1157,300`),
];

const fft2 = [
  ...section(-42, 750, `42,280 295,196 445,172 550,199 634,223 700,211 757,196 806,208 850,220 889,232 925,271 955,298 1012,313 1039,322 1060,331 1084,352 1105,385 1126,430 1144,466 1162,496 1180,490 1195,445 1210,433 1225,466`),
  ...section(1128, 1170, `70,91 85,100 97,61 109,49 124,85 136,121 145,190 157,289 169,148 178,118 190,127 199,215 211,283 220,184 228,169 240,175 256,190 262,217 280,205 287,193 304,187 310,178 320,166 326,151 334,169 340,205 346,334 352,268 358,160 370,235 379,300 385,193 400,300 406,265 412,310 418,340 424,342 427,270 432,380 438,542 443,540 447,460 453,420 458,300 463,220 470,155 476,160 482,205 490,235 497,310 504,370 510,260 516,210 523,225 529,200 534,157 540,172 545,190 550,240 558,258 565,320 570,447 575,305 581,285 588,350 595,300 602,255 609,230 614,640 617,330 623,415 626,280 630,260 636,245 642,387 650,375 656,310 662,320 670,310 678,445 681,280 686,206 691,595 694,310 704,335 710,290 718,280 724,278 730,342 738,310 744,250 748,330 751,658 754,360 760,310 767,210 773,340 780,475 783,275 793,225 798,385 804,320 810,222 816,412 820,300 824,310 830,208 838,300 846,395 852,325 858,440 864,245 869,218 875,510 878,275 887,310 893,685 896,235 904,500 907,300 914,430 917,335 920,400 926,250 934,462 937,265 946,265 949,320 952,270 956,330 959,265 963,370 966,240 970,350 973,275 979,558 982,285 986,370 992,410 995,145 1001,260 1008,512 1011,290 1016,400 1021,260 1026,470 1029,320 1033,280 1037,460 1040,530 1043,310 1045,690 1048,270 1052,390 1056,280 1059,430 1061,548 1064,320 1067,440 1070,158 1074,270 1077,465 1080,300 1084,430 1087,270 1090,380 1094,250 1098,210 1102,360 1105,535 1108,290 1111,420 1114,270 1117,500 1120,330 1124,460 1127,300 1130,250 1134,380 1137,540 1139,203 1143,330 1146,490 1149,280 1152,350 1155,260 1157,310`),
];

const voltTicks = ["0.00357", "0.00266", "0.00174", "0.00083", "-0.00009", "-0.00100", "-0.00192", "-0.00284", "-0.00375"];
const levelTicks = ["0.00", "-20.00", "-40.00", "-60.00", "-80.00", "-100.00", "-120.00", "-140.00", "-160.00"];

/* ---------- value window ---------- */

const ValueWindow = styled.section`
  position: absolute;
  left: 390px;
  top: 42px;
  width: 519px;
  height: 184px;
  background: #fff;
  border: 1px solid #a4a4a4;
  border-radius: 8px;
  overflow: hidden;
  box-shadow: 0 0 0 1px rgba(120, 120, 120, 0.35), 0 4px 18px 4px rgba(0, 0, 0, 0.18);
`;

const TitleBar = styled.header`
  display: flex;
  align-items: center;
  gap: 6px;
  height: 30px;
  padding: 0 9px 2px 7px;
  background: #f3f3f3;
  border-bottom: 1px solid #a0a0a0;
`;

const WindowTitle = styled.h2`
  flex: 1;
  margin: 0;
  font-size: 11px;
  font-weight: 400;
  color: #929292;
`;

const WindowTools = styled.div<{ $last?: boolean }>`
  display: flex;
  align-items: center;
  height: 26px;
  border-bottom: 1px solid #c4c4c4;
  padding-left: 2px;
  ${(p) => p.$last && "height: 29px; border-bottom: 2px solid #8c8c94;"}
`;

const MiniGroup = styled.div<{ $divided?: boolean }>`
  display: flex;
  align-items: center;
  align-self: stretch;
  ${(p) => p.$divided && "border-left: 1px solid #c4c4c4; padding-left: 2px; margin-left: 1px;"}
`;

const MiniButton = styled.button<{ $on?: boolean }>`
  display: flex;
  align-items: center;
  justify-content: center;
  width: 23px;
  height: 22px;
  border-radius: 3px;
  border: 1px solid ${(p) => (p.$on ? HIGHLIGHT_EDGE : "transparent")};
  background: ${(p) => (p.$on ? HIGHLIGHT : "none")};
`;

const Values = styled.table`
  width: 516px;
  margin-left: 1px;
  border-collapse: collapse;
  table-layout: fixed;
  font-size: 12px;
  th,
  td {
    padding: 0 8px;
    height: 19px;
    font-weight: 400;
    text-align: right;
    white-space: nowrap;
    border-right: 1px solid #ececec;
  }
  tbody th,
  tbody td {
    border-bottom: 1px solid #ececec;
  }
  tbody th {
    padding: 0 5px;
  }
  thead th {
    height: 24px;
    padding: 0 6px;
  }
  th:first-child {
    text-align: left;
  }
`;

const NameColumn = styled.col`
  width: 132px;
`;

const HeadCell = styled.span`
  display: flex;
  align-items: center;
  justify-content: flex-end;
  gap: 12px;
`;

const RowHead = styled.span`
  display: flex;
  align-items: center;
  gap: 2px;
`;

const measurements = [
  { name: "Maximum - Mini...", icon: <PeakIcon />, values: ["2.45 mV", "2.42 mV", "0.59 mV"] },
  { name: "RMS", icon: <RmsIcon />, values: ["0.71 mV", "0.53 mV", "0.53 mV"] },
  { name: "Frequency", icon: <FrequencyIcon />, values: ["-Hz", "-Hz", "-Hz"] },
];

const ValueWindowPanel = () => (
  <ValueWindow aria-label="Value window">
    <TitleBar>
      <AppIcon />
      <WindowTitle>Value window of graph 1</WindowTitle>
      <button aria-label="Close">
        <svg width="12" height="12" viewBox="0 0 12 12" fill="none" aria-hidden="true">
          <path d="M1 1l10 10M11 1L1 11" stroke="#8a8a8a" />
        </svg>
      </button>
    </TitleBar>
    <WindowTools>
      <MiniGroup>
        <Grip $width={6} />
        {viewIcons.map(([name, art, on]) => (
          <MiniButton key={name} aria-label={name} $on={on}>{art}</MiniButton>
        ))}
      </MiniGroup>
      <MiniGroup $divided>
        <Grip $width={6} />
        {rangeIcons.map(([name, art]) => (
          <MiniButton key={name} aria-label={name}>{art}</MiniButton>
        ))}
      </MiniGroup>
    </WindowTools>
    <WindowTools $last>
      <MiniGroup>
        <Grip $width={6} />
        {measureIcons.map(([name, art, on]) => (
          <MiniButton key={name} aria-label={name} $on={on}>{art}</MiniButton>
        ))}
      </MiniGroup>
    </WindowTools>
    <Values>
      <colgroup>
        <NameColumn />
        <col />
        <col />
        <col />
      </colgroup>
      <thead>
        <tr>
          <th scope="col">Measurement</th>
          <th scope="col"><HeadCell><ChannelIcon color={GREEN} size={16} />Ch1</HeadCell></th>
          <th scope="col"><HeadCell><ChannelIcon color={CYAN} size={16} />Ch2</HeadCell></th>
          <th scope="col"><HeadCell><SigmaIcon size={16} />Ch1 - Ch2</HeadCell></th>
        </tr>
      </thead>
      <tbody>
        {measurements.map((m) => (
          <tr key={m.name}>
            <th scope="row"><RowHead>{m.icon}{m.name}</RowHead></th>
            {m.values.map((v, i) => (
              <td key={i}>{v}</td>
            ))}
          </tr>
        ))}
        <tr><td /><td /><td /><td /></tr>
      </tbody>
    </Values>
  </ValueWindow>
);

/* ---------- composed parts ---------- */

const ChannelTools = ({ name, color, divided }: { name: string; color: string; divided?: boolean }) => (
  <ToolGroup $divided={divided} aria-label={`${name} settings`}>
    <Grip $width={5} />
    <ToolButton aria-label={`${name} on`}><ChannelIcon color={color} /></ToolButton>
    <ToolText $width={25} $align="left">{name}</ToolText>
    <ToolButton aria-label="Coupling"><DcIcon /></ToolButton>
    <ToolButton $on aria-label="Auto ranging"><AutoRangeIcon /></ToolButton>
    <ToolButton aria-label="Range down"><TriangleIcon dir="down" fill="#e2e2e2" stroke="#b8b8b8" /></ToolButton>
    <ToolText $width={50}>{"Range:\n200 mV"}</ToolText>
    <ToolButton aria-label="Range up"><TriangleIcon dir="up" fill="#ecec70" stroke="#8a6500" /></ToolButton>
    <Rule />
    <ProbeText $width={43} $align="left">{"Probe:\nx1"}</ProbeText>
    <Rule />
    <ToolButton aria-label="Channel settings"><PanelIcon /></ToolButton>
  </ToolGroup>
);

const GraphButton = ({ name, on, children }: { name: string; on?: boolean; children: React.ReactNode }) => (
  <ToolButton $height={30} $on={on} aria-label={name}>{children}</ToolButton>
);

const GraphEndTools = ({ number }: { number: number }) => (
  <>
    <GraphButton name="Add comment"><CommentIcon /></GraphButton>
    <GraphButton name="Remove comments"><NoCommentIcon /></GraphButton>
    <Rule $height={30} />
    <GraphButton name="Legend" on><LegendIcon /></GraphButton>
    <GraphButton name="Waveforms"><WavesIcon /></GraphButton>
    <GraphButton name="Pop out"><PopOutIcon /></GraphButton>
    <GraphButton name="Clear"><EraserIcon /></GraphButton>
    <GraphButton name="Close graph"><RemoveIcon /></GraphButton>
    <GraphNumber>{number}</GraphNumber>
  </>
);

export default function App() {
  return (
    <Page>
      <GlobalStyle />
      <MenuEdge />
      <ToolRow $height={40}>
        <ToolGroup>
          <Grip $width={5} />
          <ToolButton aria-label="Stop"><StopIcon /></ToolButton>
          <ToolButton aria-label="One shot"><OneShotIcon /></ToolButton>
          <ToolButton aria-label="Auto"><AutoIcon /></ToolButton>
          <Rule />
          <ToolButton aria-label="Faster"><TriangleIcon dir="left" fill="#00dfe4" stroke="#0060a8" /></ToolButton>
          <ToolText $width={50}>{"10.24\nms/div"}</ToolText>
          <ToolButton aria-label="Slower"><TriangleIcon dir="right" fill="#00dfe4" stroke="#0060a8" /></ToolButton>
          <Rule />
          <ToolText $width={68} $align="right">9.766 kHz</ToolText>
          <RecordText $width={64} $align="right">1 kSa</RecordText>
          <Rule />
          <ToolButton aria-label="Fewer pre samples"><PreSampleIcon /></ToolButton>
          <ToolText $width={76}>{"Pre samples:\n0 %"}</ToolText>
          <ToolButton aria-label="More pre samples"><PreSampleIcon active /></ToolButton>
          <Rule />
          <ToolText $width={50}>{"Trigger:\nCh1"}</ToolText>
          <ToolButton aria-label="Rising slope"><SlopeIcon /></ToolButton>
          <Rule />
          <ToolButton aria-label="Instrument settings"><PanelIcon /></ToolButton>
        </ToolGroup>
      </ToolRow>
      <ToolRow $height={42}>
        <ChannelTools name="Ch1" color={GREEN} />
        <Spacer $grow={15} />
        <ToolGroup $divided>
          <Grip $width={5} />
          <QuickSetupButton><QuickSetupIcon />Quick Setup...</QuickSetupButton>
        </ToolGroup>
        <Spacer $grow={11} />
        <ChannelTools name="Ch2" color={CYAN} divided />
      </ToolRow>
      <DockEdge />
      <Workspace>
        <TreePanel aria-label="Instruments">
          <ul>
            {treeRows.map((row, i) => (
              <TreeItem key={i}>
                {row.guides.map((g, j) => (
                  <GuideCell key={j} kind={g} />
                ))}
                <TreeIcon>{row.icon}</TreeIcon>
                <TreeLabel $strong={row.strong} $selected={row.selected}>{row.label}</TreeLabel>
              </TreeItem>
            ))}
          </ul>
        </TreePanel>
        <Splitter>
          <SplitterHandle aria-label="Hide instrument tree" />
        </Splitter>

        <GraphPane $active aria-label="Graph 1">
          <Axis ticks={voltTicks} unit="V" color={GREEN} strip={[GREEN]} width={59} listWidth={49} edge="none" rangeBar />
          <Axis ticks={voltTicks} unit="V" color={MAGENTA} strip={[MAGENTA]} width={50} listWidth={48} edge="right" />
          <Center>
            <GraphTools>
              <GraphButton name="Offset lines" on><OffsetIcon /></GraphButton>
              <Rule $height={30} />
              <GraphButton name="Axis layout"><LayoutIcon /></GraphButton>
              <Rule $height={30} />
              <GraphButton name="Values" on><TableIcon /></GraphButton>
              <Spacer />
              <GraphEndTools number={1} />
            </GraphTools>
            <PlotArea>
              <PlotSvg viewBox={`0 0 ${TIME_WIDTH} ${PLOT_HEIGHT}`} preserveAspectRatio="none" role="img" aria-label="Voltage over time">
                <rect width={TIME_WIDTH} height={PLOT_HEIGHT} fill="#000" />
                <path d={timeGrid} fill="#c0c0c0" />
                <Trace points={toLine(ch1Time)} stroke={GREEN} />
                <Trace points={toLine(ch2Time)} stroke={CYAN} />
                <Trace points={toLine(diffTime)} stroke={MAGENTA} />
                <rect x="620" width="1" height={PLOT_HEIGHT} fill="#fff" />
              </PlotSvg>
            </PlotArea>
            <ScrollBar>
              <ScrollArrow $dir="left" aria-label="Scroll left" />
              <ScrollTrack>
                <ScrollPart $share={219} />
                <ScrollPart $share={306} $thumb />
                <ScrollPart $share={134} />
                <ScrollMark $at={25} />
                <ScrollMark $at={75} />
                <TriggerMark />
              </ScrollTrack>
              <ScrollArrow $dir="right" aria-label="Scroll right" />
            </ScrollBar>
          </Center>
          <Axis ticks={voltTicks} unit="V" color={CYAN} strip={[CYAN]} width={52} listWidth={48} edge="both" />
          <ActiveEdge />
        </GraphPane>

        <GraphPane aria-label="Graph 2">
          <Axis ticks={levelTicks} unit="dBV" color={GREEN} strip={[GREEN]} width={45} listWidth={43} edge="right" />
          <Center>
            <GraphTools>
              <GraphButton name="Logarithmic axis" on><BarsIcon /></GraphButton>
              <Rule $height={30} />
              <GraphButton name="Axis layout"><LayoutIcon /></GraphButton>
              <Rule $height={30} />
              <GraphButton name="Values"><TableIcon /></GraphButton>
              <GraphButton name="Vertical cursors"><CursorsIcon dir="v" /></GraphButton>
              <GraphButton name="Horizontal cursors"><CursorsIcon dir="h" /></GraphButton>
              <GraphButton name="Reset cursors"><FrameIcon /></GraphButton>
              <Rule $height={30} />
              <GraphButton name="Zoom in"><MagnifierIcon mark="plus" active /></GraphButton>
              <GraphButton name="Zoom out"><MagnifierIcon mark="minus" /></GraphButton>
              <GraphButton name="Zoom 1:1"><MagnifierIcon mark="one" /></GraphButton>
              <Rule $height={30} />
              <GraphButton name="Envelope"><EnvelopeIcon /></GraphButton>
              <Rule $height={0} />
              <GraphButton name="Store reference"><MergeIcon /></GraphButton>
              <Spacer />
              <GraphEndTools number={2} />
            </GraphTools>
            <PlotArea>
              <PlotSvg viewBox={`0 0 ${FFT_WIDTH} ${PLOT_HEIGHT}`} preserveAspectRatio="none" role="img" aria-label="Frequency spectrum">
                <rect width={FFT_WIDTH} height={PLOT_HEIGHT} fill="#000" />
                <path d={fftGrid} fill="#c0c0c0" />
                <Trace points={toSteps(fft1)} stroke={GREEN} />
                <Trace points={toSteps(fft2)} stroke={CYAN} />
              </PlotSvg>
              <Legend>
                <LegendItem $color={GREEN}>FFT1( Ch1 )</LegendItem>
                <LegendItem $color={CYAN}>FFT2( Ch2 )</LegendItem>
              </Legend>
            </PlotArea>
            <ScrollBar>
              <ScrollArrow $dir="left" aria-label="Scroll left" />
              <ScrollTrack>
                <ScrollPart $share={1} $thumb />
              </ScrollTrack>
              <ScrollArrow $dir="right" aria-label="Scroll right" />
            </ScrollBar>
          </Center>
          <Axis ticks={levelTicks} unit="dBV" color="#ffffff" strip={[CYAN, MAGENTA]} width={44} listWidth={42} edge="left" />
        </GraphPane>
      </Workspace>
      <ValueWindowPanel />
    </Page>
  );
}
